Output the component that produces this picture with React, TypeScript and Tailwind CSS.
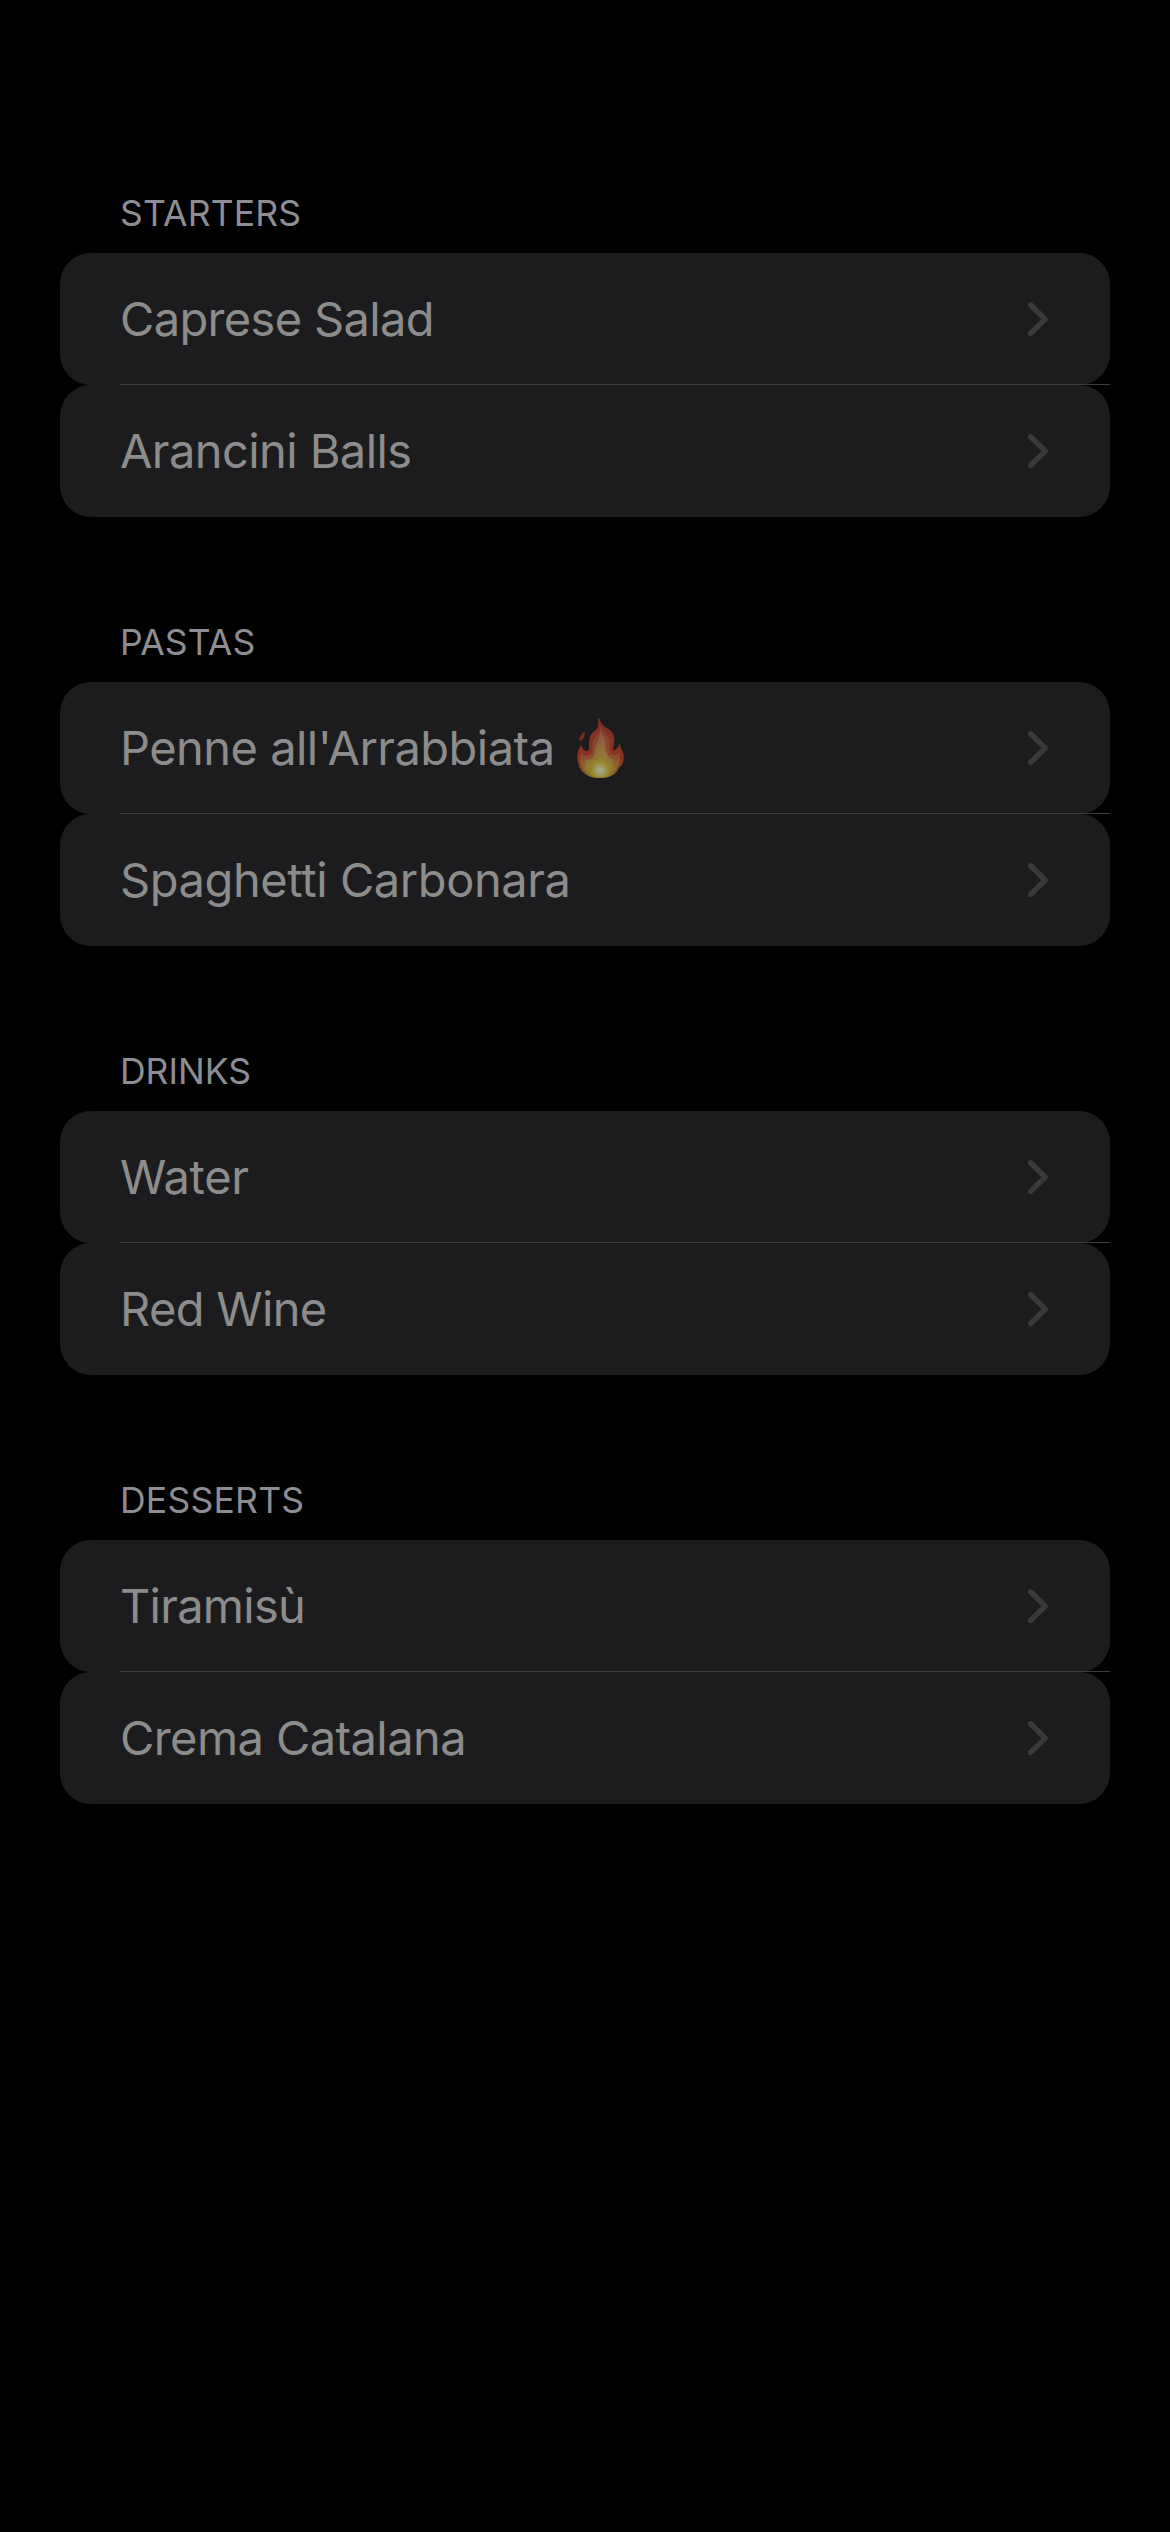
import React from "react";

type Item = { name: string; tracking: string; hot?: boolean };
type Section = { title: string; tracking: string; items: Item[] };

const sections: Section[] = [
  {
    title: "STARTERS",
    tracking: "tracking-[0.17px]",
    items: [
      { name: "Caprese Salad", tracking: "tracking-[-0.66px]" },
      { name: "Arancini Balls", tracking: "tracking-[-0.58px]" },
    ],
  },
  {
    title: "PASTAS",
    tracking: "tracking-[0.15px]",
    items: [
      { name: "Penne all'Arrabbiata", tracking: "tracking-[-0.53px]", hot: true },
      { name: "Spaghetti Carbonara", tracking: "tracking-[-0.41px]" },
    ],
  },
  {
    title: "DRINKS",
    tracking: "tracking-[0px]",
    items: [
      { name: "Water", tracking: "tracking-[-0.35px]" },
      { name: "Red Wine", tracking: "tracking-[-0.65px]" },
    ],
  },
  {
    title: "DESSERTS",
    tracking: "tracking-[0.25px]",
    items: [
      { name: "Tiramisù", tracking: "tracking-[-0.74px]" },
      { name: "Crema Catalana", tracking: "tracking-[-0.58px]" },
    ],
  },
];

function Chevron() {
  return (
    <svg className="h-9 w-6 shrink-0" viewBox="0 0 24 36" fill="none" aria-hidden="true">
      <path d="M2.6 3.8L17.2 18.1L2.6 32.4" stroke="#3a3a3c" strokeWidth="5.5" strokeLinecap="round" strokeLinejoin="round" />
    </svg>
  );
}

function Flame() {
  return (
    <svg className="h-[60px] w-[47px] shrink-0" viewBox="0 0 141 182" preserveAspectRatio="none" role="img" aria-label="Spicy">
      <defs>
        <linearGradient id="flame-outer" x1="0" y1="0" x2="0" y2="1">
          <stop offset="0" stopColor="#7d2f25" />
          <stop offset="0.7" stopColor="#8a3322" />
          <stop offset="0.88" stopColor="#8c5225" />
          <stop offset="1" stopColor="#8f7c2c" />
        </linearGradient>
        <linearGradient id="flame-middle" x1="0" y1="0" x2="0" y2="1">
          <stop offset="0" stopColor="#854030" />
          <stop offset="0.6" stopColor="#8c4a2e" />
          <stop offset="0.85" stopColor="#906f2c" />
          <stop offset="1" stopColor="#91802a" />
        </linearGradient>
        <linearGradient id="flame-inner" x1="0" y1="0" x2="0" y2="1">
          <stop offset="0" stopColor="#8c563e" />
          <stop offset="0.5" stopColor="#906a3c" />
          <stop offset="1" stopColor="#928028" />
        </linearGradient>
        <radialGradient id="flame-core" cx="70" cy="158" r="44" gradientUnits="userSpaceOnUse">
          <stop offset="0" stopColor="#aaa78c" />
          <stop offset="0.3" stopColor="#a09b65" />
          <stop offset="0.6" stopColor="#968928" stopOpacity="0.8" />
          <stop offset="1" stopColor="#917b28" stopOpacity="0" />
        </radialGradient>
      </defs>
      <path d="M23 40C25 54 20 63 8 72C5 59 11 51 23 40Z" fill="#782e22" />
      <path
        d="M64 0H67C70 16 78 24 92 32C108 42 114 56 111 76C110 84 107 92 109 97C115 99 124 89 129 75C127 91 138 97 140 113C142 128 137 142 126 151L123 156L119 163C108 176 92 182 69 182C45 182 29 176 18 163L10 157L14 156L4 148C10 149 8 146 5 141C-3 122 -1 101 15 79C12 91 19 99 28 100C38 101 36 91 36 78C36 59 42 48 50 41C59 34 65 29 64 18Z"
        fill="url(#flame-outer)"
      />
      <path
        d="M70 27C76 38 89 44 95 58C102 74 94 92 101 106C106 116 120 114 129 104C131 126 127 144 112 160C101 171 88 177 70 178C44 178 24 166 14 145C8 129 8 117 13 106C20 117 37 118 44 106C50 95 44 80 49 67C54 56 68 48 70 27Z"
        fill="url(#flame-middle)"
      />
      <path
        d="M70 40C80 54 88 70 87 88C87 105 93 119 108 126C112 139 108 152 99 162C90 172 81 176 70 177C52 176 38 169 30 155C25 147 24 136 28 128C43 127 52 117 53 102C53 82 70 66 70 40Z"
        fill="url(#flame-inner)"
      />
      <path
        d="M78 66C77 88 86 101 89 120C91 138 87 158 70 176C50 163 43 145 50 127C57 107 75 94 78 66Z"
        fill="#957b3a"
        opacity="0.5"
      />
      <ellipse cx="70" cy="143" rx="43" ry="38" fill="url(#flame-core)" />
    </svg>
  );
}

function Row({ item, divided }: { item: Item; divided: boolean }) {
  return (
    <li className="relative">
      <div className="flex h-[132px] items-center justify-between rounded-[31px] bg-[#1c1c1e] pr-[58px] pl-[60px]">
        <div className="flex items-center gap-[22.5px]">
          <span className={`text-[47px] leading-[60px] whitespace-nowrap text-[#8c8c8c] ${item.tracking}`}>{item.name}</span>
          {item.hot && <Flame />}
        </div>
        <Chevron />
      </div>
      {divided && <div className="absolute right-0 bottom-0 left-[60px] h-px bg-[#3c3c3f]" />}
    </li>
  );
}

export default function App() {
  return (
    <main className="flex h-[2532px] w-[1170px] flex-col gap-[99px] bg-black px-[60px] pt-[187px] font-['Inter',sans-serif]">
      {sections.map((section) => (
        <section key={section.title}>
          <h2 className="flex h-[66px] items-start pl-[60px]">
            <span className={`text-[35.5px] leading-[54px] text-[#8d8d93] ${section.tracking}`}>{section.title}</span>
          </h2>
          <ul>
            {section.items.map((item, i) => (
              <Row key={item.name} item={item} divided={i < section.items.length - 1} />
            ))}
          </ul>
        </section>
      ))}
    </main>
  );
}
